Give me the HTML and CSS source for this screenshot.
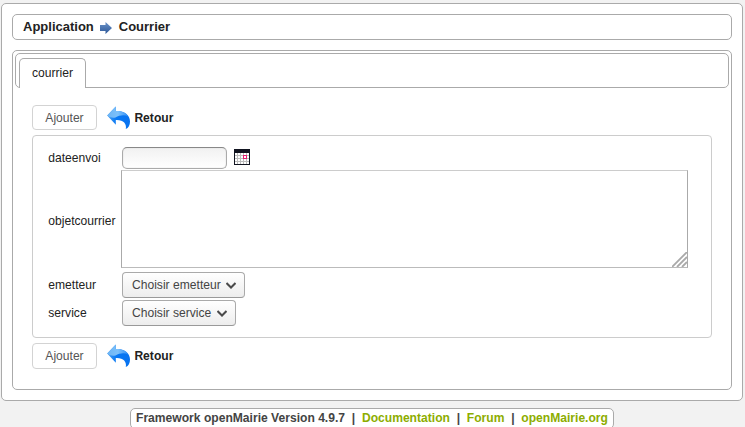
FILE: index.html
```html
<!DOCTYPE html>
<html lang="fr">
<head>
<meta charset="utf-8">
<title>Courrier</title>
<link rel="stylesheet" href="styles.css">
</head>
<body>
<svg width="0" height="0" class="defs" aria-hidden="true">
  <defs>
    <linearGradient id="back-fill" x1="0" y1="0" x2="1" y2="0">
      <stop offset="0" stop-color="#4a9ff0"/>
      <stop offset=".4" stop-color="#0878f4"/>
      <stop offset="1" stop-color="#0872ef"/>
    </linearGradient>
    <linearGradient id="back-shine" x1="0" y1="0" x2="1" y2="0">
      <stop offset="0" stop-color="#6cb4f4"/>
      <stop offset=".5" stop-color="#7cc0fa"/>
      <stop offset="1" stop-color="#2e8df5"/>
    </linearGradient>
    <linearGradient id="arrow-fill" x1="0" y1="0" x2="0" y2="1">
      <stop offset="0" stop-color="#6b93c8"/>
      <stop offset="1" stop-color="#2c5798"/>
    </linearGradient>
    <symbol id="back" viewBox="0 0 24 24">
      <path d="M.2 9.500 8.800 .5V5C17 4.500 23 9 23 15.500 23 19 21.500 22 18.800 23 20 17.500 16 13.500 8.800 14V18.700Z" fill="url(#back-fill)"/>
      <path d="M.2 9.500 8.800 .5V5C15 4.600 19.500 7 21.500 10.500 17 8.300 12.500 9.300 8.500 11.500 5.500 12.200 3 11.500 .2 9.500Z" fill="url(#back-shine)"/>
    </symbol>
  </defs>
</svg>
<main class="page">
  <nav class="breadcrumb">
    <span>Application</span>
    <svg class="crumb-arrow" viewBox="0 0 12 12"><path d="M0 3H5.500V0L12 6 5.500 12V9H0Z" fill="url(#arrow-fill)"/></svg>
    <span>Courrier</span>
  </nav>
  <section class="content">
    <div class="tabs"><a class="tab">courrier</a></div>
    <div class="actions">
      <button class="submit">Ajouter</button>
      <a class="back"><svg><use href="#back"/></svg>Retour</a>
    </div>
    <form class="form">
      <div class="row row-date">
        <label>dateenvoi</label>
        <input class="date" type="text">
        <svg class="calendar" viewBox="0 0 16 16" shape-rendering="crispEdges">
          <rect width="16" height="16" fill="#111420"/>
          <rect x="1" y="4" width="14" height="11" fill="#bdbdbd"/>
          <path fill="#fff" d="M1 4h2v2H1zM4 4h2v2H4zM7 4h2v2H7zM10 4h2v2h-2zM13 4h2v2h-2zM1 7h2v2H1zM4 7h2v2H4zM7 7h2v2H7zM10 7h2v2h-2zM13 7h2v2h-2zM1 10h2v2H1zM4 10h2v2H4zM7 10h2v2H7zM10 10h2v2h-2zM13 10h2v2h-2zM1 13h2v2H1zM4 13h2v2H4zM7 13h2v2H7zM10 13h2v2h-2zM13 13h2v2h-2z"/>
          <path fill="#e71b73" fill-rule="evenodd" d="M9 6h4v4H9zM10 7v2h2V7z"/>
        </svg>
      </div>
      <div class="row row-text">
        <label>objetcourrier</label>
        <div class="area">
          <textarea></textarea>
          <svg class="grip" viewBox="0 0 15 15"><path d="M0 15 15 0M5 15 15 5M10 15 15 10" stroke="#a9a9a9" stroke-width="1.800"/></svg>
        </div>
      </div>
      <div class="row row-select">
        <label>emetteur</label>
        <div class="select select-sender">Choisir emetteur<svg viewBox="0 0 10 7"><path d="M.5 1 5 5.500 9.500 1"/></svg></div>
      </div>
      <div class="row row-select">
        <label>service</label>
        <div class="select select-service">Choisir service<svg viewBox="0 0 10 7"><path d="M.5 1 5 5.500 9.500 1"/></svg></div>
      </div>
    </form>
    <div class="actions actions-end">
      <button class="submit">Ajouter</button>
      <a class="back"><svg><use href="#back"/></svg>Retour</a>
    </div>
  </section>
</main>
<footer class="footer">
  <span>Framework openMairie Version 4.9.7</span><i>|</i><a>Documentation</a><i>|</i><a>Forum</a><i>|</i><a>openMairie.org</a>
</footer>
</body>
</html>
```
FILE: styles.css
```css
* {
  box-sizing: border-box;
}

body {
  margin: 0;
  height: 427px;
  padding: 3px 2px 0 1px;
  overflow: hidden;
  background: #f2f2f2;
  color: #222;
  font: 12.1px "Liberation Sans", Arial, sans-serif;
}

.defs {
  position: absolute;
}

.page {
  height: 398px;
  padding: 10px;
  border: 1px solid #aaa;
  border-radius: 5px;
  background: #fff;
}

.breadcrumb {
  display: flex;
  align-items: center;
  height: 26px;
  padding: 0 10px 1px;
  border: 1px solid #aaa;
  border-radius: 5px;
  font-size: 13px;
  font-weight: bold;
}

.crumb-arrow {
  width: 12px;
  height: 12px;
  margin: 2px 7px 0 6px;
}

.content {
  height: 340px;
  margin-top: 10px;
  padding: 2px;
  border: 1px solid #aaa;
  border-radius: 5px;
}

.tabs {
  display: flex;
  height: 35px;
  padding: 4px 3px 0;
  border: 1px solid #aaa;
  border-radius: 5px;
}

.tab {
  width: 67px;
  height: 30px;
  padding-top: 7px;
  border: 1px solid #aaa;
  border-bottom: 0;
  border-radius: 5px 5px 0 0;
  background: #fff;
  box-shadow: 0 1px #fff;
  text-align: center;
}

.actions {
  display: flex;
  align-items: center;
  height: 25px;
  margin: 17px 17px 0;
}

.actions-end {
  height: 26px;
  margin-top: 5px;
}

.submit {
  width: 65px;
  height: 100%;
  padding: 0;
  border: 1px solid #d3d3d3;
  border-radius: 4px;
  background: #fff;
  color: #555;
  font: inherit;
}

.back {
  display: flex;
  align-items: center;
  margin-left: 10px;
  font-weight: bold;
}

.back svg {
  width: 24px;
  height: 24px;
  margin-right: 3.400px;
}

.form {
  height: 203px;
  margin: 5px 17px 0;
  padding: 11px 15px;
  border: 1px solid #ccc;
  border-radius: 4px;
}

.row {
  display: flex;
  align-items: center;
}

.row label {
  width: 73px;
  padding-left: .3px;
}

.row-date {
  height: 23px;
}

.row-date label {
  padding-bottom: 2px;
}

.date {
  width: 105px;
  height: 22px;
  margin: 0 7px 1px 1px;
  padding: 0 5px;
  border: 1px solid #aaa;
  border-top-color: #888;
  border-radius: 5px;
  background: linear-gradient(#f1f1f1, #fff);
  box-shadow: inset 0 0 1px #bbb;
}

.calendar {
  width: 16px;
  height: 16px;
  margin-bottom: 3px;
}

.area {
  position: relative;
  width: 567px;
  height: 98px;
}

.area textarea {
  display: block;
  width: 100%;
  height: 100%;
  border: 1px solid #aaa;
  border-top-color: #ccc;
  border-bottom-color: #bbb;
  resize: none;
}

.grip {
  position: absolute;
  right: 1px;
  bottom: 1px;
  width: 15px;
  height: 15px;
}

.row-text {
  margin-bottom: 4px;
}

.row-text label {
  padding-top: 4px;
}

.row-select {
  height: 26px;
  margin-bottom: 2px;
}

.select {
  display: flex;
  align-items: center;
  height: 26px;
  margin-left: 1px;
  padding: 0 8px 1px 9px;
  border: 1px solid #aaa;
  border-bottom-color: #999;
  border-radius: 4px;
  background: linear-gradient(#fff, #ededed);
  color: #444;
}

.select-sender {
  width: 123px;
}

.select-service {
  width: 114px;
}

.select svg {
  width: 10px;
  height: 7px;
  margin: 1px 0 0 auto;
  fill: none;
  stroke: #4a4a4a;
  stroke-width: 2;
}

.footer {
  display: flex;
  justify-content: space-between;
  width: 484px;
  height: 21px;
  margin: 7px 0 0 129px;
  padding: 2px 5px;
  border: 1px solid #aaa;
  border-radius: 5px;
  background: #fff;
  color: #444;
  font-weight: bold;
}

.footer i {
  font-style: normal;
}

.footer a {
  color: #8dad00;
}
```
